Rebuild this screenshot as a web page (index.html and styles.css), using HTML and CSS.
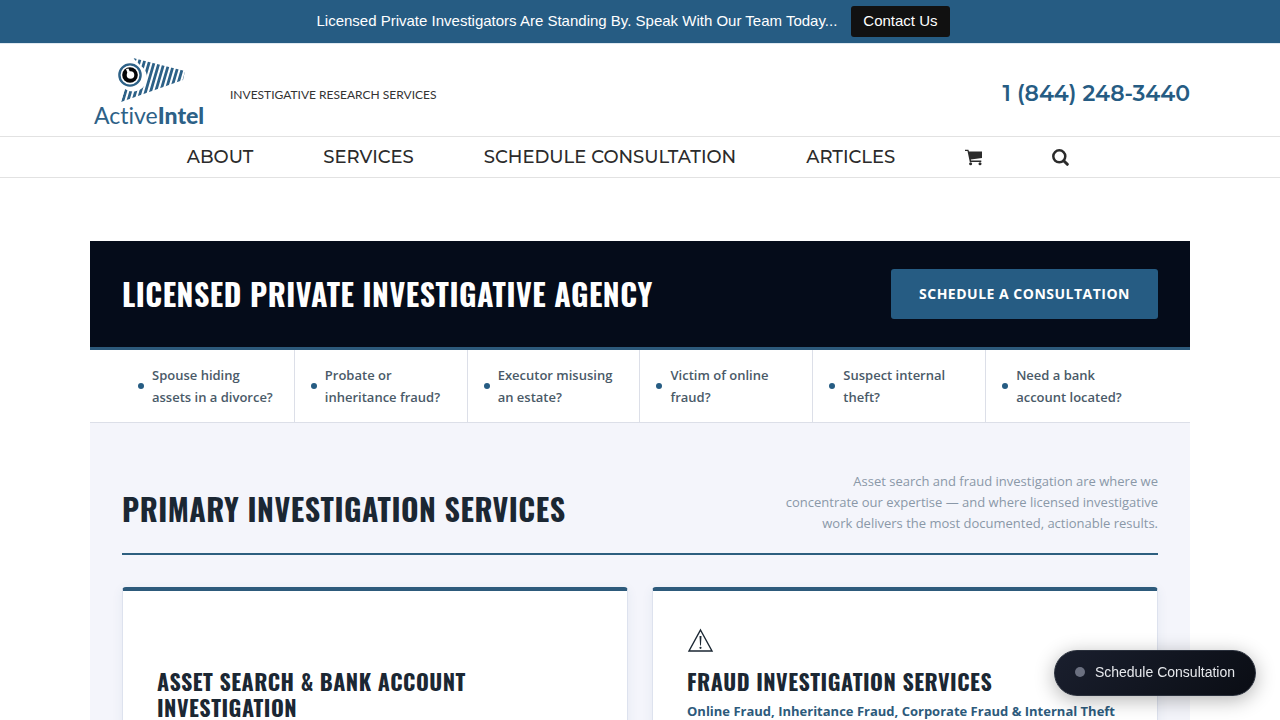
FILE: index.html
```html
<!DOCTYPE html>
<html lang="en">
<head>
    <meta charset="UTF-8">
    <meta name="viewport" content="width=device-width, initial-scale=1.0">
    <title>Active Intel</title>
    <link rel="stylesheet" href="styles.css">
</head>
<body>
    <div class="notice">
        <span>Licensed Private Investigators Are Standing By. Speak With Our Team Today...</span>
        <a class="notice-button" href="#contact">Contact Us</a>
    </div>
    <header class="header">
        <div class="container header-inner">
            <a class="brand" href="#home">
                <span class="logo">
                    <svg class="logo-mark" viewBox="0 0 112 46" aria-hidden="true">
                        <defs>
                            <clipPath id="cone">
                                <path d="M39 0L91 13L89 22L27 44L31 31A13 13 0 0 0 47 8Z"/>
                            </clipPath>
                        </defs>
                        <g clip-path="url(#cone)" stroke="#2d6187" stroke-width="2.8">
                            <path d="M42 -2L28 46M47 -2L33 46M52 -2L38 46M57 -2L43 46M62 -2L48 46M67 -2L53 46M72 -2L58 46M77 -2L63 46M82 -2L68 46M87 -2L73 46M92 -2L78 46M97 -2L83 46"/>
                        </g>
                        <circle cx="36" cy="17" r="12.5" fill="#fff"/>
                        <circle cx="36" cy="17" r="10.6" fill="none" stroke="#2d6187" stroke-width="2.4"/>
                        <circle cx="36" cy="17" r="7.8" fill="#050608"/>
                        <circle cx="36.5" cy="17" r="3.8" fill="#fff"/>
                        <path d="M32 11L34.5 10.5L36 14L33.5 15Z" fill="#fff"/>
                    </svg>
                    <span class="logo-name">Active<b>Intel</b></span>
                </span>
                <span class="tagline">INVESTIGATIVE RESEARCH SERVICES</span>
            </a>
            <a class="phone" href="tel:18442483440">1 (844) 248-3440</a>
        </div>
    </header>
    <nav class="nav">
        <a href="#about">ABOUT</a>
        <a href="#services">SERVICES</a>
        <a href="#schedule">SCHEDULE CONSULTATION</a>
        <a href="#articles">ARTICLES</a>
        <a href="#cart" aria-label="Cart">
            <svg class="nav-icon" viewBox="0 0 17 18" fill="#2b2b2b">
                <path d="M0 1.8h3.4l.6 1.6h13v6.6L5.8 11.4l.3 1.2h10.2V14H4.8L2.5 3.1H0z"/>
                <circle cx="5.6" cy="15.8" r="1.5"/>
                <circle cx="15" cy="15.8" r="1.5"/>
            </svg>
        </a>
        <a href="#search" aria-label="Search">
            <svg class="nav-icon" viewBox="0 0 17 18" fill="none" stroke="#2b2b2b">
                <circle cx="7.3" cy="8.3" r="6" stroke-width="2.5"/>
                <path d="M11.7 12.7L15.3 16.3" stroke-width="3" stroke-linecap="round"/>
            </svg>
        </a>
    </nav>
    <main class="container main">
        <section class="hero">
            <h1>LICENSED PRIVATE INVESTIGATIVE AGENCY</h1>
            <a class="hero-button" href="#schedule">SCHEDULE A CONSULTATION</a>
        </section>
        <ul class="concerns">
            <li>Spouse hiding assets in a divorce?</li>
            <li>Probate or inheritance fraud?</li>
            <li>Executor misusing an estate?</li>
            <li>Victim of online fraud?</li>
            <li>Suspect internal theft?</li>
            <li>Need a bank account located?</li>
        </ul>
        <section class="services" id="services">
            <div class="services-head">
                <h2>PRIMARY INVESTIGATION SERVICES</h2>
                <p>Asset search and fraud investigation are where we concentrate our expertise — and where licensed investigative work delivers the most documented, actionable results.</p>
            </div>
            <div class="cards">
                <article class="card">
                    <div class="card-icon"></div>
                    <h3>ASSET SEARCH &amp; BANK ACCOUNT INVESTIGATION</h3>
                </article>
                <article class="card">
                    <div class="card-icon">
                        <svg viewBox="0 0 28 28" fill="none" stroke="#1b2733" aria-hidden="true">
                            <path d="M13.5 3L25 24H2Z" stroke-width="1.4"/>
                            <path d="M12.5 9h2l-.6 9.5h-.8z" fill="#1b2733" stroke="none"/>
                            <circle cx="13.5" cy="20.8" r="1.1" fill="#1b2733" stroke="none"/>
                        </svg>
                    </div>
                    <h3>FRAUD INVESTIGATION SERVICES</h3>
                    <p class="card-sub">Online Fraud, Inheritance Fraud, Corporate Fraud &amp; Internal Theft</p>
                </article>
            </div>
        </section>
    </main>
    <button class="chat" type="button"><span class="chat-dot"></span>Schedule Consultation</button>
</body>
</html>
```
FILE: styles.css
```css
* {
    box-sizing: border-box;
}
body {
    margin: 0;
    background-color: #fff;
    color: #1b2733;
    font-family: "Open Sans", sans-serif;
}
a {
    color: inherit;
    text-decoration: none;
}
h1, h2, h3, p, ul {
    margin: 0;
}
.container {
    width: 100%;
    max-width: 1100px;
    margin: 0 auto;
}

/* Top notice */
.notice {
    display: flex;
    justify-content: center;
    align-items: baseline;
    gap: 14px;
    padding: 6px 14px 6px 0;
    background-color: #265c83;
    border-bottom: 1px solid #dfe9f1;
    color: #fff;
    font: 15px/30px "Liberation Sans", sans-serif;
}
.notice-button {
    padding: 0 12px 1px;
    background-color: #111;
    border-radius: 3px;
}

/* Header */
.header {
    border-bottom: 1px solid #e2e2e2;
}
.header-inner {
    display: flex;
    justify-content: space-between;
    align-items: center;
    padding: 14px 0 9px;
}
.brand {
    display: flex;
    align-items: center;
    gap: 24px;
    padding-left: 4px;
}
.logo {
    display: flex;
    flex-direction: column;
}
.logo-mark {
    width: 112px;
    height: 46px;
}
.logo-name {
    color: #2d6187;
    font: 400 23px/23px Lato, sans-serif;
    font-variant-ligatures: none;
}
.logo-name b {
    font-weight: 900;
}
.tagline {
    padding-top: 4px;
    color: #333;
    font: 12px/16px Lato, sans-serif;
}
.phone {
    padding-top: 2px;
    color: #265c83;
    font: 600 22px/28px Montserrat, Inter, sans-serif;
}

/* Navigation */
.nav {
    display: flex;
    justify-content: center;
    align-items: center;
    gap: 70px;
    padding-right: 24px;
    border-bottom: 1px solid #e2e2e2;
    color: #2b2b2b;
    font: 500 18px/40px Montserrat, Inter, sans-serif;
}
.nav-icon {
    display: block;
    width: 17px;
    height: 18px;
}

/* Hero */
.main {
    margin-top: 63px;
}
.hero {
    display: flex;
    justify-content: space-between;
    align-items: center;
    padding: 28px 32px;
    background-color: #050c1a;
    border-bottom: 3px solid #2d5a7b;
    color: #fff;
}
h1, h2, h3 {
    font-family: Oswald, "Liberation Sans Narrow", sans-serif;
    font-weight: 700;
    letter-spacing: 0.5px;
}
h1 {
    font-size: 30px;
    line-height: 44px;
}
.hero-button {
    padding: 0 28px;
    background-color: #265c83;
    border-radius: 3px;
    font-size: 14px;
    font-weight: 700;
    line-height: 50px;
    letter-spacing: 0.5px;
}

/* Concerns strip */
.concerns {
    display: flex;
    padding: 0 32px;
    border-bottom: 1px solid #dcdfe8;
    list-style: none;
}
.concerns li {
    display: flex;
    flex: 1;
    align-items: center;
    gap: 8px;
    padding: 14px 16px;
    border-right: 1px solid #dcdfe8;
    color: #4a5a68;
    font-size: 13px;
    font-weight: 600;
    line-height: 22px;
}
.concerns li:last-child {
    border-right: none;
}
.concerns li::before {
    content: "";
    flex: none;
    width: 6px;
    height: 6px;
    border-radius: 50%;
    background-color: #265c83;
}

/* Services */
.services {
    padding: 48px 32px;
    background-color: #f4f5fb;
}
.services-head {
    display: flex;
    justify-content: space-between;
    align-items: flex-end;
    margin-bottom: 32px;
    padding-bottom: 19px;
    border-bottom: 2px solid #2d5f7f;
}
h2 {
    font-size: 30px;
    line-height: 50px;
}
.services-head p {
    max-width: 380px;
    color: #8a98a8;
    font-size: 13px;
    line-height: 21px;
    text-align: right;
}
.cards {
    display: grid;
    grid-template-columns: 1fr 1fr;
    gap: 24px;
}
.card {
    padding: 36px 34px;
    background-color: #fff;
    border: 1px solid #dde2ee;
    border-top: 4px solid #2d5a7b;
    border-radius: 4px;
    box-shadow: 0 2px 12px rgba(38, 92, 131, 0.07);
}
.card-icon {
    height: 41px;
}
.card-icon svg {
    width: 28px;
    height: 28px;
}
h3 {
    font-size: 22px;
    line-height: 26px;
}
.card-sub {
    margin-top: 7px;
    color: #2d5a7b;
    font-size: 13px;
    font-weight: 700;
    line-height: 20px;
}

/* Floating button */
.chat {
    position: fixed;
    right: 24px;
    bottom: 24px;
    display: flex;
    align-items: center;
    gap: 10px;
    padding: 0 20px 2px;
    background: linear-gradient(135deg, #1a1f2e, #0a0d14);
    border: 1px solid #2a303c;
    border-radius: 23px;
    box-shadow: 0 4px 20px rgba(0, 0, 0, 0.3);
    color: #e6e8ec;
    font: 14px/42px "Liberation Sans", sans-serif;
}
.chat-dot {
    width: 10px;
    height: 10px;
    border-radius: 50%;
    background-color: #6b7080;
}
```
